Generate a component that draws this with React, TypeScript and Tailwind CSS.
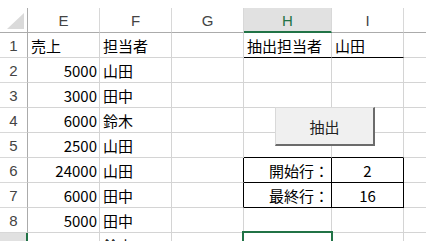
import React from "react";

type Cell = {
  t?: string;
  align?: "l" | "r" | "c";
  bb?: boolean; // black bottom
  br?: boolean; // black right
};

const cols = ["E", "F", "G", "H", "I", ""];
const widths = ["w-[72px]", "w-[72px]", "w-[72px]", "w-[88px]", "w-[72px]", "w-[22px]"];

const rows: Cell[][] = [
  [{ t: "売上" }, { t: "担当者" }, {}, { t: "抽出担当者", bb: true }, { t: "山田", bb: true }, {}],
  [{ t: "5000", align: "r" }, { t: "山田" }, {}, {}, {}, {}],
  [{ t: "3000", align: "r" }, { t: "田中" }, {}, {}, {}, {}],
  [{ t: "6000", align: "r" }, { t: "鈴木" }, {}, {}, {}, {}],
  [{ t: "2500", align: "r" }, { t: "山田" }, {}, { bb: true }, { bb: true }, {}],
  [{ t: "24000", align: "r" }, { t: "山田" }, { br: true }, { t: "開始行：", align: "r", bb: true, br: true }, { t: "2", align: "c", bb: true, br: true }, {}],
  [{ t: "6000", align: "r" }, { t: "田中" }, { br: true }, { t: "最終行：", align: "r", bb: true, br: true }, { t: "16", align: "c", bb: true, br: true }, {}],
  [{ t: "5000", align: "r" }, { t: "田中" }, {}, {}, {}, {}],
  [{ t: "10500", align: "r" }, { t: "鈴木" }, {}, {}, {}, {}],
];

export default function App() {
  return (
    <div className="relative h-[241px] w-[426px] overflow-hidden bg-white font-['Noto_Sans_CJK_JP','Noto_Sans',sans-serif] text-[15px] leading-none text-black">
      <div className="h-[8px]" />
      {/* header row */}
      <div className="flex h-[25px]">
        <div className="relative box-border h-[25px] w-[28px] border-r border-b border-[#ababab]">
          <svg className="absolute left-[7px] top-[5px]" width="17" height="16" viewBox="0 0 17 16">
            <polygon points="17,0 17,16 0,16" fill="#dadada" />
          </svg>
        </div>
        {cols.map((c, i) => {
          const sel = c === "H";
          return (
            <div
              key={i}
              className={`box-border flex h-[25px] items-center justify-center ${widths[i]} ${
                i < cols.length - 1 ? "border-r border-[#d8d8d8]" : ""
              } ${
                sel
                  ? "border-b-2 border-b-[#217346] bg-[#e1e1e1] text-[#217346]"
                  : "border-b border-b-[#ababab] text-[#444444]"
              } pt-[1px] font-['Liberation_Sans','Noto_Sans',sans-serif] text-[15px]`}
            >
              {c}
            </div>
          );
        })}
      </div>
      {rows.map((r, ri) => {
        const rowSel = ri === 8;
        return (
          <div key={ri} className="flex h-[25px]">
            <div
              className={`box-border flex h-[25px] w-[28px] items-center justify-center border-b border-[#d8d8d8] font-['Liberation_Sans','Noto_Sans',sans-serif] text-[15px] text-[#444444] ${
                rowSel ? "border-r-2 border-r-[#217346] bg-[#e1e1e1]" : "border-r border-r-[#ababab]"
              }`}
            >
              {ri + 1}
            </div>
            {r.map((cell, ci) => {
              const align =
                cell.align === "r" ? "justify-end pr-[2px]" : cell.align === "c" ? "justify-center" : "justify-start pl-[3px]";
              return (
                <div
                  key={ci}
                  className={`box-border flex h-[25px] items-center whitespace-nowrap ${widths[ci]} ${align} ${
                    cell.bb ? "border-b border-b-black" : "border-b border-b-[#d4d4d4]"
                  } ${
                    ci < r.length - 1 ? (cell.br ? "border-r border-r-black" : "border-r border-r-[#d4d4d4]") : ""
                  }`}
                >
                  {cell.t}
                </div>
              );
            })}
          </div>
        );
      })}

      {/* button */}
      <div className="absolute left-[275px] top-[107px] box-border flex h-[39px] w-[100px] items-center justify-center border-t border-l border-t-[#d9d9d9] border-l-[#d9d9d9] border-r-2 border-b-2 border-r-[#6b6b6b] border-b-[#6b6b6b] bg-[#f0f0f0] text-[15px] text-[#222222]">
        抽出
      </div>

      {/* selected cell */}
      <div className="absolute left-[242px] top-[231px] box-border h-[30px] w-[91px] border-2 border-[#217346]" />
    </div>
  );
}
